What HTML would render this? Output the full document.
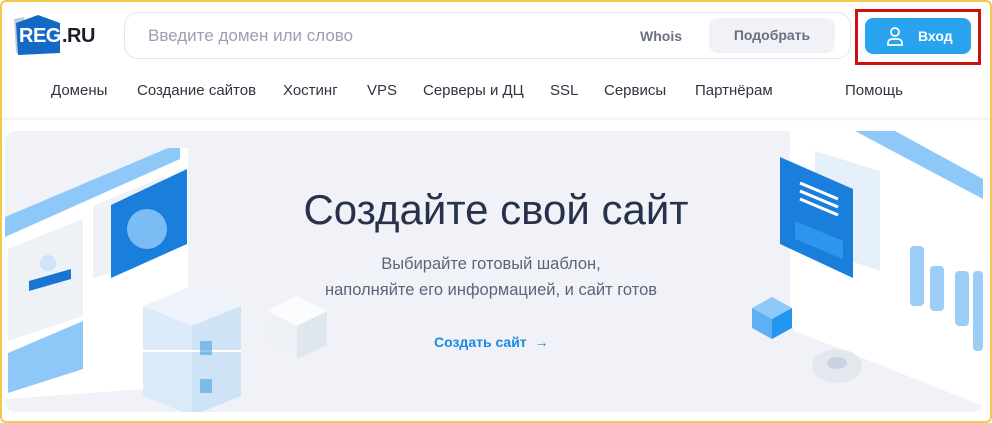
<!DOCTYPE html>
<html><head><meta charset="utf-8"><style>
*{margin:0;padding:0;box-sizing:border-box}
body{width:992px;height:423px;overflow:hidden;background:#fff;font-family:"Liberation Sans","DejaVu Sans",sans-serif;position:relative}
.frame{position:absolute;left:0;top:0;width:992px;height:423px;border:2px solid #f2c94c;border-radius:6px;pointer-events:none;z-index:10}
.abs{position:absolute}
.nav span{position:absolute;top:82px;font-size:15px;color:#2f3440}
</style></head><body>
<div class="frame"></div>
<!-- logo -->
<svg class="abs" style="left:12px;top:13px" width="50" height="44" viewBox="0 0 50 44">
<polygon points="2,6 12,4 12,40 4,40" fill="#c9ccd3"/>
<polygon points="4,10 26,2 48,10 48,40 6,42" fill="#1469c7"/>
</svg>
<div class="abs" style="left:19px;top:25px;font-size:20px;font-weight:bold;color:#fff;letter-spacing:-0.5px">REG</div>
<div class="abs" style="left:62px;top:25px;font-size:20px;font-weight:bold;color:#1b1f2a;letter-spacing:-0.5px">.RU</div>
<!-- search -->
<div class="abs" style="left:124px;top:12px;width:727px;height:47px;border:1px solid #e3e6ed;border-radius:14px"></div>
<div class="abs" style="left:148px;top:26px;font-size:17px;color:#9aa0b2">Введите домен или слово</div>
<div class="abs" style="left:640px;top:28px;font-size:14px;font-weight:bold;color:#6a7080">Whois</div>
<div class="abs" style="left:709px;top:18px;width:126px;height:35px;background:#f0f2f7;border-radius:9px;font-size:14px;font-weight:bold;color:#6a7080;text-align:center;line-height:35px">Подобрать</div>
<!-- login -->
<div class="abs" style="left:855px;top:9px;width:126px;height:56px;border:3px solid #d01010"></div>
<div class="abs" style="left:865px;top:18px;width:106px;height:36px;background:#2aa3ef;border-radius:8px"></div>
<svg class="abs" style="left:885px;top:26px" width="20" height="20" viewBox="0 0 20 20" fill="none" stroke="#fff" stroke-width="1.8"><circle cx="10" cy="6" r="4"/><path d="M3 19v-2a4 4 0 0 1 4-4h6a4 4 0 0 1 4 4v2z"/></svg>
<div class="abs" style="left:918px;top:28px;font-size:14px;font-weight:bold;color:#fff">Вход</div>
<!-- nav -->
<div class="nav">
<span style="left:51px">Домены</span><span style="left:137px">Создание сайтов</span><span style="left:283px">Хостинг</span><span style="left:367px">VPS</span><span style="left:423px">Серверы и ДЦ</span><span style="left:550px">SSL</span><span style="left:604px">Сервисы</span><span style="left:695px">Партнёрам</span><span style="left:845px">Помощь</span>
</div>
<div class="abs" style="left:2px;top:118px;width:988px;height:3px;background:linear-gradient(#eceef3,#fff)"></div>
<!-- hero -->
<div class="abs" style="left:5px;top:131px;width:978px;height:281px;background:#f1f2f8;border-radius:10px;overflow:hidden">
<svg width="978" height="281" viewBox="0 0 978 281" style="position:absolute;left:0;top:0">
<!-- left panel -->
<polygon points="0,106 163,17 183,17 183,255 0,268" fill="#fff"/>
<polygon points="0,86 163,17 175,17 175,28 0,106" fill="#8ec8f8"/>
<polygon points="3,118 78,88 78,185 3,210" fill="#eef1f6"/>
<circle cx="43" cy="132" r="8" fill="#cfe3fa"/>
<polygon points="24,150 66,138 66,148 24,160" fill="#1a75d2"/>
<polygon points="3,222 78,190 78,238 3,262" fill="#8ec8f8"/>
<polygon points="88,75 160,45 160,120 88,148" fill="#eef1f6"/>
<polygon points="106,74 182,38 182,113 106,147" fill="#1a7fdc"/>
<circle cx="142" cy="98" r="20" fill="#7bbcf5"/>
<!-- servers -->
<polygon points="138,175 187,155 236,175 187,195" fill="#eef3fb"/>
<polygon points="138,175 187,195 187,285 138,265" fill="#dbeaf9"/>
<polygon points="187,195 236,175 236,265 187,285" fill="#cfe3f7"/>
<line x1="138" y1="220" x2="236" y2="220" stroke="#fff" stroke-width="2"/>
<rect x="195" y="210" width="12" height="14" fill="#4aa0dc" opacity=".6"/>
<rect x="195" y="248" width="12" height="14" fill="#4aa0dc" opacity=".6"/>
<!-- white cube -->
<polygon points="262,180 292,165 322,180 292,195" fill="#fbfcfe"/>
<polygon points="262,180 292,195 292,228 262,214" fill="#eef2f7"/>
<polygon points="292,195 322,180 322,214 292,228" fill="#dfe6ee"/>
<!-- right panel -->
<polygon points="785,0 978,0 978,275 790,200 785,190" fill="#fff"/>
<polygon points="850,0 890,0 978,48 978,68" fill="#8ec8f8"/>
<polygon points="810,20 875,40 875,140 810,118" fill="#e6f0fb"/>
<polygon points="775,26 848,58 848,147 775,113" fill="#1a7fdc"/>
<line x1="795" y1="52" x2="833" y2="68" stroke="#fff" stroke-width="3"/>
<line x1="795" y1="60" x2="833" y2="76" stroke="#fff" stroke-width="3"/>
<line x1="795" y1="68" x2="833" y2="84" stroke="#fff" stroke-width="3"/>
<polygon points="790,90 838,110 838,128 790,108" fill="#2d95ec"/>
<rect x="905" y="115" width="14" height="60" rx="4" fill="#9ccdf7"/>
<rect x="925" y="135" width="14" height="45" rx="4" fill="#9ccdf7"/>
<rect x="950" y="140" width="14" height="55" rx="4" fill="#9ccdf7"/>
<rect x="968" y="140" width="10" height="80" rx="4" fill="#9ccdf7"/>
<!-- blue cube -->
<polygon points="747,177 767,166 787,177 767,188" fill="#8fc9f7"/>
<polygon points="747,177 767,188 767,208 747,197" fill="#5eb0f2"/>
<polygon points="767,188 787,177 787,197 767,208" fill="#2496ee"/>
<!-- gear -->
<ellipse cx="832" cy="235" rx="25" ry="17" fill="#e3e8ef"/>
<ellipse cx="832" cy="232" rx="10" ry="6" fill="#c9d2de"/>
</svg>
</div>
<div class="abs" style="left:0;width:992px;top:186px;text-align:center;font-size:42px;color:#27324a">Создайте свой сайт</div>
<div class="abs" style="left:0;width:982px;top:251px;text-align:center;font-size:16.5px;line-height:26px;color:#5b6478">Выбирайте готовый шаблон,<br>наполняйте его информацией, и сайт готов</div>
<div class="abs" style="left:434px;top:334px;font-size:14px;font-weight:bold;color:#1a8ae0">Создать сайт &nbsp;→</div>
</body></html>
